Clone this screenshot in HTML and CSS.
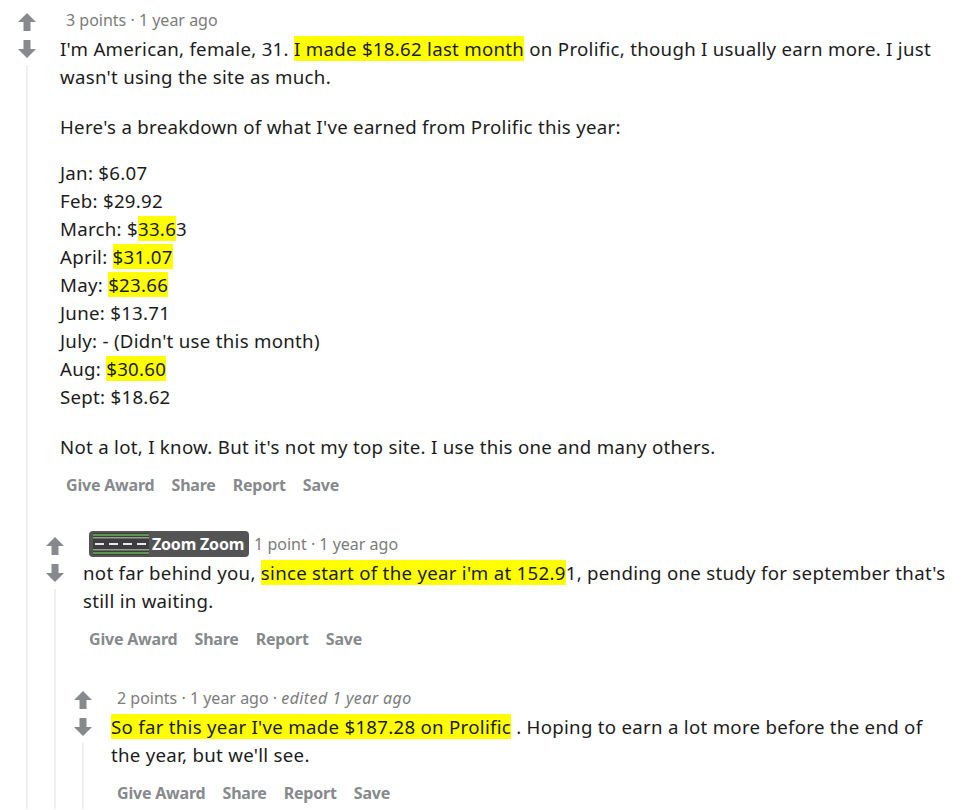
FILE: index.html
```html
<!DOCTYPE html>
<html lang="en">
<head>
    <meta charset="UTF-8">
    <meta name="viewport" content="width=device-width, initial-scale=1.0">
    <title>Comment thread</title>
    <link rel="stylesheet" href="styles.css">
</head>
<body>

    <div class="page">

        <!-- Top level comment -->
        <div class="comment top">
            <div class="votes">
                <svg class="arrow" viewBox="0 0 20 20"><path d="M10 1 L19 10 H13.5 V19 H6.5 V10 H1 Z"/></svg>
                <svg class="arrow" viewBox="0 0 20 20"><path d="M10 19 L19 10 H13.5 V1 H6.5 V10 H1 Z"/></svg>
                <div class="thread-line"></div>
            </div>
            <div class="main">
                <div class="entry">
                    <div class="meta"><span>3 points · 1 year ago</span></div>
                    <div class="text">
                        <p>I'm American, female, 31. <span class="hl">I made $18.62 last month</span> on Prolific, though I usually earn more. I just wasn't using the site as much.</p>
                        <p>Here's a breakdown of what I've earned from Prolific this year:</p>
                        <p class="list">
                            Jan: $6.07<br>
                            Feb: $29.92<br>
                            March: $<span class="hl">33.6</span>3<br>
                            April: <span class="hl">$31.07</span><br>
                            May: <span class="hl">$23.66</span><br>
                            June: $13.71<br>
                            July: - (Didn't use this month)<br>
                            Aug: <span class="hl">$30.60</span><br>
                            Sept: $18.62
                        </p>
                        <p>Not a lot, I know. But it's not my top site. I use this one and many others.</p>
                    </div>
                    <div class="actions">
                        <span>Give Award</span>
                        <span>Share</span>
                        <span>Report</span>
                        <span>Save</span>
                    </div>
                </div>

                <div class="replies">

                    <!-- First reply -->
                    <div class="comment">
                        <div class="votes">
                            <svg class="arrow" viewBox="0 0 20 20"><path d="M10 1 L19 10 H13.5 V19 H6.5 V10 H1 Z"/></svg>
                            <svg class="arrow" viewBox="0 0 20 20"><path d="M10 19 L19 10 H13.5 V1 H6.5 V10 H1 Z"/></svg>
                            <div class="thread-line"></div>
                        </div>
                        <div class="main">
                            <div class="entry">
                                <div class="meta">
                                    <span class="flair">
                                        <svg class="flair-pic" viewBox="0 0 56 22">
                                            <rect width="56" height="22" fill="#3d3d3d"/>
                                            <rect y="1" width="56" height="2" fill="#5b9a4c"/>
                                            <rect y="4" width="56" height="1.5" fill="#9a9a9a"/>
                                            <rect x="2" y="10" width="9" height="2" fill="#e8e8e8"/>
                                            <rect x="16" y="10" width="9" height="2" fill="#e8e8e8"/>
                                            <rect x="30" y="10" width="9" height="2" fill="#e8e8e8"/>
                                            <rect x="44" y="10" width="9" height="2" fill="#e8e8e8"/>
                                            <rect y="16" width="56" height="1.5" fill="#9a9a9a"/>
                                            <rect y="19" width="56" height="2" fill="#5b9a4c"/>
                                        </svg>
                                        <span>Zoom Zoom</span>
                                    </span>
                                    <span>1 point · 1 year ago</span>
                                </div>
                                <div class="text">
                                    <p>not far behind you, <span class="hl">since start of the year i'm at 152.9</span>1, pending one study for september that's still in waiting.</p>
                                </div>
                                <div class="actions">
                                    <span>Give Award</span>
                                    <span>Share</span>
                                    <span>Report</span>
                                    <span>Save</span>
                                </div>
                            </div>

                            <div class="replies">

                                <!-- Second reply -->
                                <div class="comment">
                                    <div class="votes">
                                        <svg class="arrow" viewBox="0 0 20 20"><path d="M10 1 L19 10 H13.5 V19 H6.5 V10 H1 Z"/></svg>
                                        <svg class="arrow" viewBox="0 0 20 20"><path d="M10 19 L19 10 H13.5 V1 H6.5 V10 H1 Z"/></svg>
                                        <div class="thread-line"></div>
                                    </div>
                                    <div class="main">
                                        <div class="entry">
                                            <div class="meta"><span>2 points · 1 year ago · <em>edited 1 year ago</em></span></div>
                                            <div class="text">
                                                <p><span class="hl">So far this year I've made $187.28 on Prolific</span> . Hoping to earn a lot more before the end of the year, but we'll see.</p>
                                            </div>
                                            <div class="actions">
                                                <span>Give Award</span>
                                                <span>Share</span>
                                                <span>Report</span>
                                                <span>Save</span>
                                            </div>
                                        </div>
                                    </div>
                                </div>

                            </div>
                        </div>
                    </div>

                </div>
            </div>
        </div>

    </div>

</body>
</html>
```

FILE: styles.css
```css
/* General styling */
body {
    margin: 0;
    background-color: #fff;
    font-family: "Noto Sans", "Open Sans", sans-serif;
    color: #1c1c1c;
}

.page {
    padding: 8px 20px 0 13px;
}

/* Comment layout: vote column + main column */
.comment {
    display: grid;
    grid-template-columns: 28px 1fr;
}

.replies > .comment {
    padding-top: 31px;
}

.votes {
    display: flex;
    flex-direction: column;
    align-items: center;
    padding-top: 4px;
}

.arrow {
    width: 20px;
    height: 20px;
    fill: #878a8c;
}

.arrow + .arrow {
    margin-top: 7px;
}

.thread-line {
    flex: 1;
    width: 2px;
    margin-top: 6px;
    background-color: #edeff1;
}

.entry {
    padding-left: 14px;
}

.top > .main > .entry {
    padding-left: 19px;
}

/* Meta line */
.meta {
    display: flex;
    align-items: center;
    gap: 5px;
    height: 24px;
    padding-left: 6px;
    font-size: 16px;
    color: #7c7c7c;
}

.meta em {
    font-style: italic;
    letter-spacing: 0.4px;
}

.flair {
    display: inline-flex;
    align-items: center;
    gap: 3px;
    height: 26px;
    padding: 0 5px 0 4px;
    border-radius: 4px;
    background-color: #545454;
    color: #fff;
    font-weight: bold;
    font-size: 16px;
    letter-spacing: -0.2px;
}

.flair-pic {
    width: 56px;
    height: 22px;
}

/* Body text */
.text {
    margin-top: 3px;
    font-size: 18.67px;
    line-height: 28px;
    letter-spacing: 0.28px;
}

.text p {
    margin: 0 0 22px;
}

.text p:last-child {
    margin-bottom: 0;
}

.text p.list {
    margin-top: -4px;
}

.hl {
    background-color: #ffff00;
}

/* Action row */
.actions {
    display: flex;
    align-items: center;
    gap: 17px;
    height: 32px;
    margin-top: 8px;
    padding-left: 6px;
    font-size: 16px;
    font-weight: bold;
    letter-spacing: -0.2px;
    color: #878a8c;
}
```
